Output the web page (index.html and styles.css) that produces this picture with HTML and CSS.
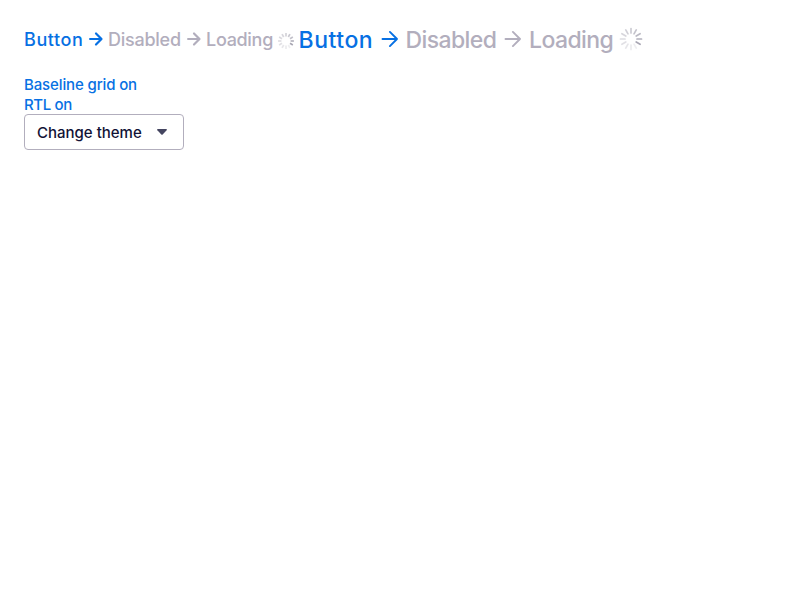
FILE: index.html
```
<!DOCTYPE html>
<html lang="en">
<head>
<meta charset="utf-8">
<title>Link buttons</title>
<link rel="stylesheet" href="styles.css">
</head>
<body>
<svg class="defs" aria-hidden="true">
  <symbol id="spinner" viewBox="-12 -12 24 24">
    <g stroke="currentColor" stroke-width="1.7" stroke-linecap="round">
      <path d="M0-6V-10.5" opacity=".58"/>
      <path d="M0-6V-10.5" opacity=".68" transform="rotate(30)"/>
      <path d="M0-6V-10.5" opacity=".78" transform="rotate(60)"/>
      <path d="M0-6V-10.5" opacity=".9" transform="rotate(90)"/>
      <path d="M0-6V-10.5" transform="rotate(120)"/>
      <path d="M0-6V-10.5" opacity=".18" transform="rotate(150)"/>
      <path d="M0-6V-10.5" opacity=".22" transform="rotate(180)"/>
      <path d="M0-6V-10.5" opacity=".28" transform="rotate(210)"/>
      <path d="M0-6V-10.5" opacity=".34" transform="rotate(240)"/>
      <path d="M0-6V-10.5" opacity=".4" transform="rotate(270)"/>
      <path d="M0-6V-10.5" opacity=".46" transform="rotate(300)"/>
      <path d="M0-6V-10.5" opacity=".52" transform="rotate(330)"/>
    </g>
  </symbol>
  <symbol id="spinner-small" viewBox="-8 -8 16 16">
    <g stroke="currentColor" stroke-width="1.7">
      <path d="M0-4.6V-7.9" opacity=".5"/>
      <path d="M0-4.6V-7.9" opacity=".6" transform="rotate(30)"/>
      <path d="M0-4.6V-7.9" opacity=".7" transform="rotate(60)"/>
      <path d="M0-4.6V-7.9" opacity=".85" transform="rotate(90)"/>
      <path d="M0-4.6V-7.9" transform="rotate(120)"/>
      <path d="M0-4.6V-7.9" opacity=".18" transform="rotate(150)"/>
      <path d="M0-4.6V-7.9" opacity=".22" transform="rotate(180)"/>
      <path d="M0-4.6V-7.9" opacity=".28" transform="rotate(210)"/>
      <path d="M0-4.6V-7.9" opacity=".34" transform="rotate(240)"/>
      <path d="M0-4.6V-7.9" opacity=".38" transform="rotate(270)"/>
      <path d="M0-4.6V-7.9" opacity=".42" transform="rotate(300)"/>
      <path d="M0-4.6V-7.9" opacity=".46" transform="rotate(330)"/>
    </g>
  </symbol>
  <symbol id="arrow-small" viewBox="0 0 16 16">
    <path d="M2.1 8H13M8 2.5 13.5 8 8 13.5" fill="none" stroke="currentColor" stroke-width="2.2" stroke-linecap="round" stroke-linejoin="round"/>
  </symbol>
  <symbol id="arrow-large" viewBox="0 0 24 24">
    <path d="M4.5 12H19M11.9 4.9 19 12 11.9 19.1" fill="none" stroke="currentColor" stroke-width="1.9" stroke-linecap="round" stroke-linejoin="round"/>
  </symbol>
</svg>
<div class="row">
  <a class="link small w-button"><span>Button</span><svg class="icon"><use href="#arrow-small"/></svg></a>
  <a class="link small off w-disabled"><span>Disabled</span><svg class="icon"><use href="#arrow-small"/></svg></a>
  <a class="link small off w-loading"><span>Loading</span><svg class="icon spin"><use href="#spinner-small"/></svg></a>
  <a class="link large w-button"><span>Button</span><svg class="icon"><use href="#arrow-large"/></svg></a>
  <a class="link large off w-disabled"><span>Disabled</span><svg class="icon"><use href="#arrow-large"/></svg></a>
  <a class="link large off w-loading"><span>Loading</span><svg class="icon spin"><use href="#spinner"/></svg></a>
</div>
<div class="tools">
  <a class="tool grid-toggle">Baseline grid on</a>
  <a class="tool rtl-toggle">RTL on</a>
  <div class="select"><span>Change theme</span><svg class="caret" viewBox="0 0 10 6"><path d="M.8 0H9.2Q10.4.2 9.6 1.2L5.7 5.5Q5 6.2 4.3 5.5L.4 1.2Q-.4.2.8 0Z" fill="currentColor"/></svg></div>
</div>
</body>
</html>
```
FILE: styles.css
```
* { box-sizing: border-box; }
body { margin: 0; padding: 24px; background: #fff; color: #111236; font-family: Inter, sans-serif; }
.defs { position: absolute; width: 0; height: 0; }
.row { display: flex; gap: 4px; height: 32px; align-items: center; }
.link { display: flex; justify-content: space-between; align-items: center; color: #0770e3; white-space: nowrap; flex: none; }
.off { color: #b2aebd; }
.icon { display: block; flex: none; }
.small { font-size: 18px; line-height: 24px; font-weight: 450; }
.small .icon { width: 16px; height: 16px; margin-top: -2px; }
.small .spin { margin-top: 2px; }
.large { font-size: 23px; line-height: 32px; font-weight: 450; }
.large .icon { width: 24px; height: 24px; margin-top: -2px; }
.spin { color: #a9a7b4; }
.small.w-button { width: 80px; letter-spacing: .6px; }
.small.w-disabled { width: 93.5px; margin-right: .5px; letter-spacing: -.25px; }
.small.w-loading { width: 88px; margin-right: .5px; letter-spacing: -.3px; }
.large.w-button { width: 103px; letter-spacing: .55px; }
.large.w-disabled { width: 119.5px; letter-spacing: -.6px; }
.large.w-loading { width: 114px; letter-spacing: -.57px; }
.tools { display: flex; flex-direction: column; align-items: flex-start; margin-top: 19px; }
.tool { color: #0770e3; font-size: 15px; line-height: 20px; font-weight: 500; }
.grid-toggle { letter-spacing: -.13px; }
.rtl-toggle { letter-spacing: -.35px; }
.select { display: flex; align-items: center; justify-content: space-between; width: 160px; height: 36px; margin-top: -1px; padding: 0 16px 0 12px; border: 1px solid #b2aebd; border-radius: 4px; font-size: 15px; font-weight: 450; }
.caret { width: 10px; height: 6px; color: #444560; }
```
